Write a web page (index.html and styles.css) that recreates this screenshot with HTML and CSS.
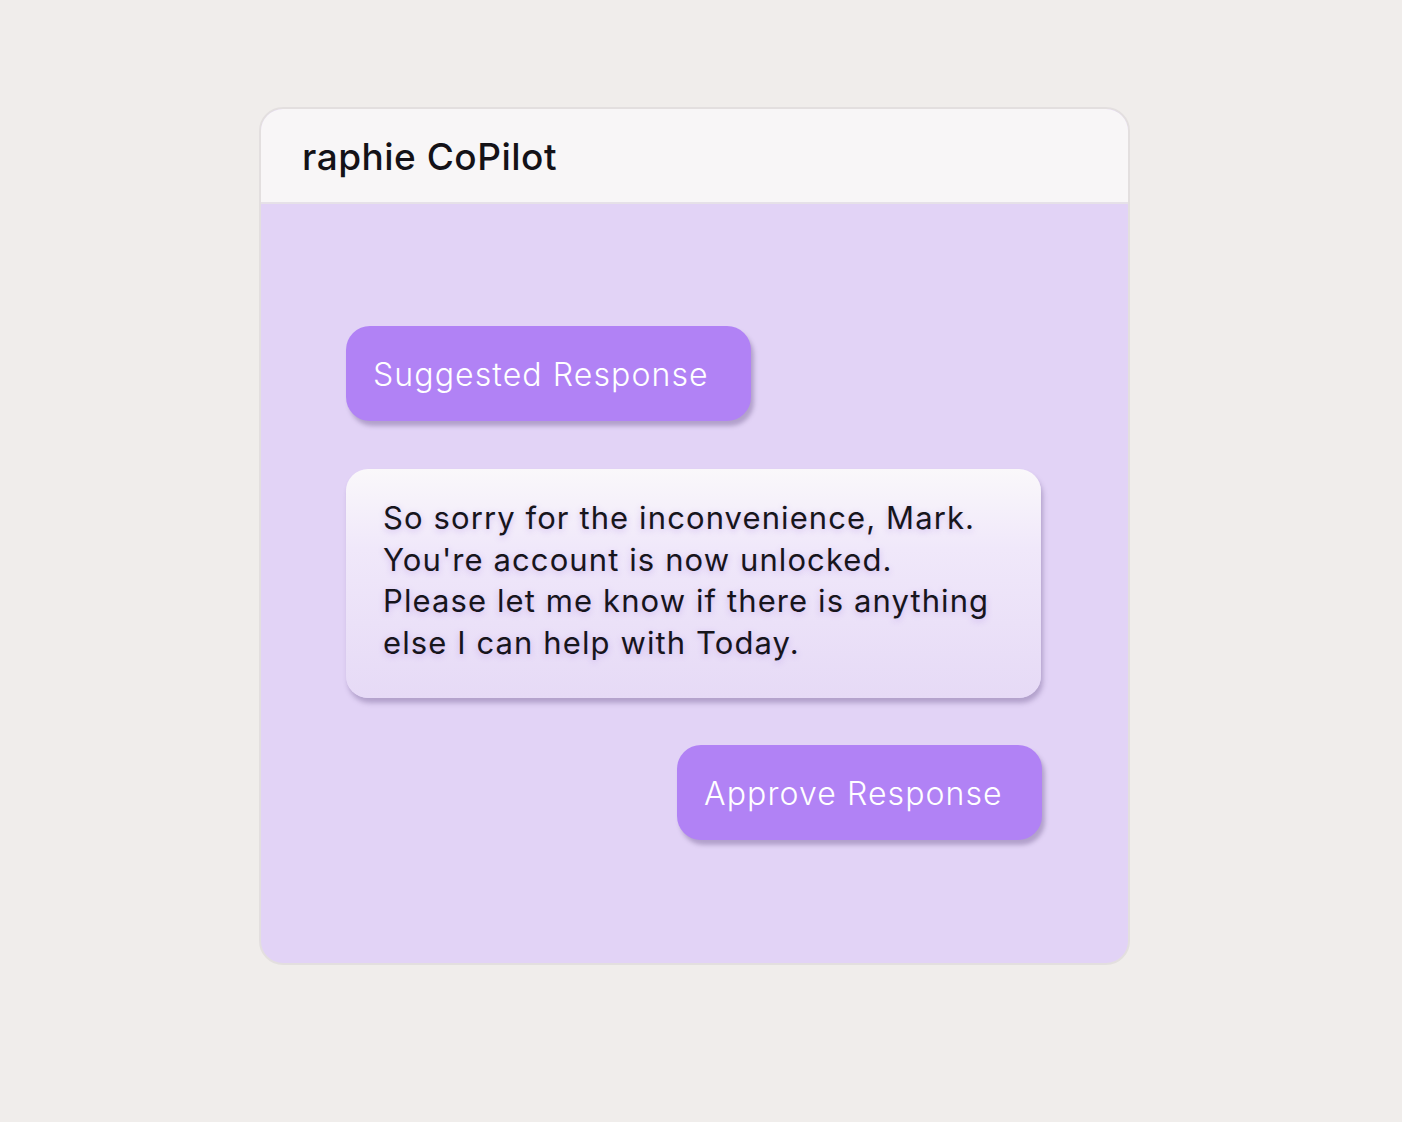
FILE: index.html
```html
<!DOCTYPE html>
<html>
<head>
<meta charset="utf-8">
<link rel="stylesheet" href="styles.css">
</head>
<body>
<div class="page">
  <div class="card">
    <div class="card-header">
      <h1 class="title">raphie CoPilot</h1>
    </div>
    <div class="card-body">
      <div class="pill pill-suggest">Suggested Response</div>
      <div class="message">
        <p>So sorry for the inconvenience, Mark.<br>You're account is now unlocked.<br>Please let me know if there is anything<br>else I can help with Today.</p>
      </div>
      <div class="actions">
        <div class="pill pill-approve">Approve Response</div>
      </div>
    </div>
  </div>
</div>
</body>
</html>
```
FILE: styles.css
```css
html, body {
  margin: 0;
  padding: 0;
}
body {
  background: #f0edeb;
  font-family: Inter, "Noto Sans", sans-serif;
  width: 1402px;
  height: 1122px;
  overflow: hidden;
}
.page {
  padding-top: 107px;
  padding-left: 259px;
}
.card {
  width: 867px;
  height: 854px;
  border: 2px solid #e3dfdf;
  border-radius: 24px;
  overflow: hidden;
  background: #e2d3f6;
  display: flex;
  flex-direction: column;
}
.card-header {
  height: 95px;
  background: #f8f6f7;
  border-bottom: 2px solid #e6e1e8;
  display: flex;
  align-items: center;
  padding-left: 41px;
  box-sizing: border-box;
  flex-shrink: 0;
}
.title {
  margin: 0;
  font-size: 37px;
  font-weight: 500;
  color: #141217;
  letter-spacing: 0.5px;
  padding-top: 2px;
}
.card-body {
  flex: 1;
  padding: 122px 87px 0 85px;
  display: flex;
  flex-direction: column;
  align-items: flex-start;
}
.pill {
  background: #b182f5;
  color: #ffffff;
  font-weight: 300;
  font-size: 32px;
  letter-spacing: 1.1px;
  border-radius: 24px;
  height: 95px;
  display: flex;
  align-items: center;
  padding-left: 27px;
  padding-top: 2px;
  box-sizing: border-box;
  box-shadow: 3px 5px 4px rgba(120, 100, 150, 0.45);
}
.pill-suggest {
  width: 405px;
}
.message {
  margin-top: 48px;
  width: 695px;
  height: 229px;
  box-sizing: border-box;
  border-radius: 22px;
  background: linear-gradient(180deg, #faf8fa 0%, #f0e8fa 35%, #e6daf6 100%);
  box-shadow: 2px 5px 5px rgba(120, 100, 150, 0.45);
  padding: 28px 30px 0 37px;
}
.message p {
  margin: 0;
  font-size: 31px;
  line-height: 41.5px;
  letter-spacing: 1.1px;
  color: #17151c;
  font-weight: 400;
  text-shadow: 0 2px 6px rgba(170, 130, 230, 0.45);
}
.actions {
  width: 696px;
  display: flex;
  justify-content: flex-end;
  margin-top: 47px;
}
.pill-approve {
  width: 365px;
}
```
